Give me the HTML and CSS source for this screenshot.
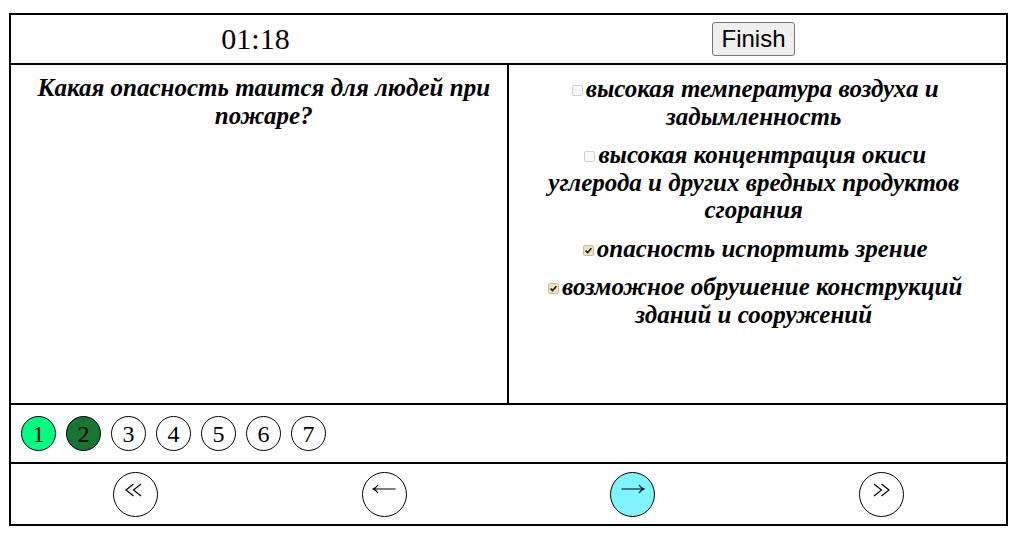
FILE: index.html
```html
<!DOCTYPE html>
<html lang="ru">
<head>
<meta charset="utf-8">
<title>Тест</title>
<link rel="stylesheet" href="styles.css">
</head>
<body>
<div class="quiz">
  <header class="top">
    <div class="timer">01:18</div>
    <div class="finish-cell"><button class="finish" type="button">Finish</button></div>
  </header>
  <main class="body">
    <div class="question">Какая опасность таится для людей при пожаре?</div>
    <div class="answers">
      <label class="option"><span class="box"></span>высокая температура воздуха и задымленность</label>
      <label class="option"><span class="box"></span>высокая концентрация окиси углерода и других вредных продуктов сгорания</label>
      <label class="option"><span class="box checked"><svg viewBox="0 0 11 11" width="11" height="11"><path d="M2.6 5.6 L4.6 7.6 L8.4 3.3" fill="none" stroke="#111" stroke-width="1.5"/></svg></span>опасность испортить зрение</label>
      <label class="option"><span class="box checked"><svg viewBox="0 0 11 11" width="11" height="11"><path d="M2.6 5.6 L4.6 7.6 L8.4 3.3" fill="none" stroke="#111" stroke-width="1.5"/></svg></span>возможное обрушение конструкций зданий и сооружений</label>
    </div>
  </main>
  <nav class="pages">
    <span class="page done">1</span>
    <span class="page current">2</span>
    <span class="page">3</span>
    <span class="page">4</span>
    <span class="page">5</span>
    <span class="page">6</span>
    <span class="page">7</span>
  </nav>
  <nav class="controls">
    <div class="ctl-cell">
      <span class="ctl dbl" title="Первый">
        <svg viewBox="0 0 18 14" width="18" height="14"><path d="M8.5 1 L1 7 L8.5 13 M16 1 L8.5 7 L16 13" fill="none" stroke="#000" stroke-width="1.2"/></svg>
      </span>
    </div>
    <div class="ctl-cell">
      <span class="ctl single" title="Назад">
        <svg viewBox="0 0 24 10" width="24" height="10"><path d="M1 5 H23.5 M6 1 Q4 4 1 5 Q4 6 6 9" fill="none" stroke="#000" stroke-width="1.1"/></svg>
      </span>
    </div>
    <div class="ctl-cell">
      <span class="ctl single active" title="Вперёд">
        <svg viewBox="0 0 24 10" width="24" height="10"><path d="M0.5 5 H23 M18 1 Q20 4 23 5 Q20 6 18 9" fill="none" stroke="#000" stroke-width="1.1"/></svg>
      </span>
    </div>
    <div class="ctl-cell">
      <span class="ctl dbl" title="Последний">
        <svg viewBox="0 0 18 14" width="18" height="14"><path d="M2 1 L9.5 7 L2 13 M9.5 1 L17 7 L9.5 13" fill="none" stroke="#000" stroke-width="1.2"/></svg>
      </span>
    </div>
  </nav>
</div>
</body>
</html>
```
FILE: styles.css
```css
html, body {
  margin: 0;
  padding: 0;
  background: #fff;
}

body {
  font-family: "Liberation Serif", "Times New Roman", serif;
  color: #000;
}

.quiz {
  box-sizing: border-box;
  width: 999px;
  margin: 13px 0 0 9px;
  border: 2px solid #000;
}

.top {
  display: grid;
  grid-template-columns: 1fr 1fr;
  align-items: center;
  justify-items: center;
  height: 48px;
  padding-right: 5px;
  border-bottom: 2px solid #000;
}

.timer {
  font-size: 30px;
  line-height: 34px;
  padding-right: 6px;
}

.finish {
  font-family: "Liberation Sans", Arial, sans-serif;
  font-size: 24px;
  padding: 2px 8px;
  color: #000;
  background: #efefef;
  border: 1px solid #767676;
  border-radius: 3px;
  line-height: 28px;
}

.body {
  display: grid;
  grid-template-columns: 1fr 1fr;
  height: 338px;
  border-bottom: 2px solid #000;
  font-size: 25px;
  font-weight: bold;
  font-style: italic;
  line-height: 27.5px;
}

.question {
  border-right: 2px solid #000;
  padding: 9px 7px 0 17px;
  text-align: center;
}

.answers {
  padding: 10px 38px 0 31px;
  display: flex;
  flex-direction: column;
  gap: 11px;
  text-align: center;
}

.option {
  display: block;
}

.box {
  display: inline-block;
  box-sizing: border-box;
  width: 11px;
  height: 11px;
  margin: 0 3px 0 3px;
  border: 1px solid #d0d0d0;
  border-radius: 2px;
  background: #fafafa;
  vertical-align: 1px;
  position: relative;
}

.box.checked {
  background: #efe3c4;
  border-color: #cdbb92;
}

.box svg {
  position: absolute;
  left: -1px;
  top: -1px;
}

.pages {
  display: flex;
  align-items: center;
  gap: 10px;
  height: 57px;
  padding: 0 10px;
  border-bottom: 2px solid #000;
}

.page {
  box-sizing: border-box;
  width: 35px;
  height: 35px;
  border: 1px solid #000;
  border-radius: 50%;
  display: flex;
  align-items: center;
  justify-content: center;
  font-size: 24px;
  line-height: 1;
  background: #fff;
}

.page.done {
  background: #00ff80;
}

.page.current {
  background: #187533;
}

.controls {
  display: grid;
  grid-template-columns: repeat(4, 1fr);
  height: 60px;
  align-items: center;
}

.ctl-cell {
  display: flex;
  justify-content: center;
}

.ctl {
  box-sizing: border-box;
  width: 45px;
  height: 45px;
  border: 1px solid #000;
  border-radius: 50%;
  background: #fff;
  display: flex;
  justify-content: center;
  align-items: flex-start;
}

.ctl svg {
  display: block;
}

.ctl.dbl {
  padding-top: 10px;
  padding-right: 2px;
}

.ctl.single {
  padding-top: 11px;
}

.ctl.active {
  background: #80f4fe;
}
```
